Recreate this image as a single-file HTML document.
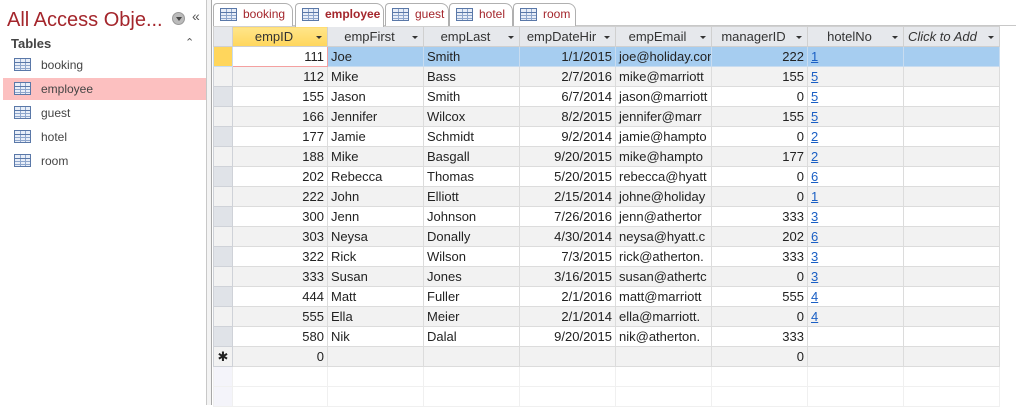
<!DOCTYPE html>
<html><head><meta charset="utf-8"><style>
*{margin:0;padding:0;box-sizing:border-box}
body{width:1016px;height:405px;background:#fff;font-family:"Liberation Sans",sans-serif;position:relative;overflow:hidden;color:#222}
.nav{position:absolute;left:0;top:0;width:207px;height:405px;background:#fff;border-right:1px solid #c8c8c8}
.sep{position:absolute;left:207px;top:0;width:5px;height:405px;background:#f3f3f3;border-right:1px solid #a8a8a8}
.title{position:absolute;left:7px;top:9px;font-size:20px;color:#a4262c;white-space:nowrap}
.circ{position:absolute;left:172px;top:12px;width:13px;height:13px;border-radius:50%;background:#bbb;border:1px solid #999}
.circ:after{content:"";position:absolute;left:3px;top:4px;border:3px solid transparent;border-top:4px solid #444}
.ch{position:absolute;left:192px;top:8px;font-size:14px;color:#555}
.tables{position:absolute;left:11px;top:36px;font-size:13px;font-weight:bold;color:#444}
.up{position:absolute;left:185px;top:36px;font-size:11px;color:#555}
.item{position:absolute;left:3px;width:203px;height:22px;font-size:12px;color:#444;line-height:22px;padding-left:38px}
.item.sel{background:#fcc0c0}
.ic{position:absolute;width:17px;height:13px;border:1px solid #5a78a8;background:
linear-gradient(#5a78a8,#5a78a8) 0 3px/100% 1px no-repeat,
linear-gradient(#8ea6cc,#8ea6cc) 0 6px/100% 1px no-repeat,
linear-gradient(#8ea6cc,#8ea6cc) 0 9px/100% 1px no-repeat,
linear-gradient(90deg,#8ea6cc,#8ea6cc) 5px 0/1px 100% no-repeat,
linear-gradient(90deg,#8ea6cc,#8ea6cc) 10px 0/1px 100% no-repeat,#e8eef8}
.item .ic{left:11px;top:4px}
.tabbar{position:absolute;left:213px;top:0;width:803px;height:26px;background:#fff;border-bottom:1px solid #c8c8c8}
.tab{position:absolute;top:3px;height:23px;border:1px solid #b0b0b0;border-bottom:none;border-radius:4px 8px 0 0;background:#fff;font-size:12px;color:#a4262c;line-height:21px;padding-left:29px;white-space:nowrap}
.tab .ic{left:6px;top:4px}
.tab.act{font-weight:bold;height:24px;z-index:2}
table{position:absolute;left:213px;top:26px;width:786px;border-collapse:collapse;table-layout:fixed;font-size:13px}
td{height:20px;border:1px solid #dcdcdc;padding:0 3px;white-space:nowrap;overflow:hidden}
th{height:20px;background:#e6e8ec;border:1px solid #d0d0d0;font-weight:normal;font-size:13px;color:#333;position:relative;text-align:center;padding-right:12px;white-space:nowrap;overflow:hidden}
th:after{content:"";position:absolute;right:5px;top:9px;border:3px solid transparent;border-top:3px solid #333}
th.s{background:#e6e8ec;padding:0}th.s:after{display:none}
th.y{background:linear-gradient(#ffe58a,#ffd65c)}
td.sel{background:#e0e3e8;border-color:#cfd2d8;padding:0;text-align:center}
tr.g td{background:#f2f2f2}
tr.b td{background:#a6cdf0;border-color:#c8dcf0}
tr.b td.sel{background:#ffd65c}
tr.b td.cur{background:#fff;border:1px solid #f4a0a0}
tr.e td{background:#fff;border-color:#f0f0f0}
tr.e td.sel{background:#f4f4fa}
.r{text-align:right}
a{color:#1a5fc4;text-decoration:underline}
</style></head><body>
<div class="nav">
<div class="title">All Access Obje...</div><div class="circ"></div><div class="ch">«</div>
<div class="tables">Tables</div><div class="up">⌃</div>
<div class="item" style="top:54px"><span class="ic"></span>booking</div>
<div class="item sel" style="top:78px"><span class="ic"></span>employee</div>
<div class="item" style="top:102px"><span class="ic"></span>guest</div>
<div class="item" style="top:126px"><span class="ic"></span>hotel</div>
<div class="item" style="top:150px"><span class="ic"></span>room</div>
</div>
<div class="sep"></div>
<div class="tabbar">
<div class="tab" style="left:0px;width:80px"><span class="ic"></span>booking</div>
<div class="tab act" style="left:82px;width:89px"><span class="ic"></span>employee</div>
<div class="tab" style="left:172px;width:64px"><span class="ic"></span>guest</div>
<div class="tab" style="left:236px;width:64px"><span class="ic"></span>hotel</div>
<div class="tab" style="left:300px;width:63px"><span class="ic"></span>room</div>
</div>
<table>
<colgroup><col style="width:19px"><col style="width:95px"><col style="width:96px"><col style="width:96px"><col style="width:96px"><col style="width:96px"><col style="width:96px"><col style="width:96px"><col style="width:96px"></colgroup>
<tr><th class="s"></th><th class="y">empID</th><th>empFirst</th><th>empLast</th><th>empDateHir</th><th>empEmail</th><th>managerID</th><th>hotelNo</th><th style="font-style:italic;text-align:left;padding-left:4px">Click to Add</th></tr>
<tr class="b"><td class="sel"></td><td class="r cur">111</td><td>Joe</td><td>Smith</td><td class="r">1/1/2015</td><td>joe@holiday.com</td><td class="r">222</td><td><a>1</a></td><td></td></tr>
<tr class="g"><td class="sel"></td><td class="r">112</td><td>Mike</td><td>Bass</td><td class="r">2/7/2016</td><td>mike@marriott</td><td class="r">155</td><td><a>5</a></td><td></td></tr>
<tr><td class="sel"></td><td class="r">155</td><td>Jason</td><td>Smith</td><td class="r">6/7/2014</td><td>jason@marriott</td><td class="r">0</td><td><a>5</a></td><td></td></tr>
<tr class="g"><td class="sel"></td><td class="r">166</td><td>Jennifer</td><td>Wilcox</td><td class="r">8/2/2015</td><td>jennifer@marr</td><td class="r">155</td><td><a>5</a></td><td></td></tr>
<tr><td class="sel"></td><td class="r">177</td><td>Jamie</td><td>Schmidt</td><td class="r">9/2/2014</td><td>jamie@hampto</td><td class="r">0</td><td><a>2</a></td><td></td></tr>
<tr class="g"><td class="sel"></td><td class="r">188</td><td>Mike</td><td>Basgall</td><td class="r">9/20/2015</td><td>mike@hampto</td><td class="r">177</td><td><a>2</a></td><td></td></tr>
<tr><td class="sel"></td><td class="r">202</td><td>Rebecca</td><td>Thomas</td><td class="r">5/20/2015</td><td>rebecca@hyatt</td><td class="r">0</td><td><a>6</a></td><td></td></tr>
<tr class="g"><td class="sel"></td><td class="r">222</td><td>John</td><td>Elliott</td><td class="r">2/15/2014</td><td>johne@holiday</td><td class="r">0</td><td><a>1</a></td><td></td></tr>
<tr><td class="sel"></td><td class="r">300</td><td>Jenn</td><td>Johnson</td><td class="r">7/26/2016</td><td>jenn@athertor</td><td class="r">333</td><td><a>3</a></td><td></td></tr>
<tr class="g"><td class="sel"></td><td class="r">303</td><td>Neysa</td><td>Donally</td><td class="r">4/30/2014</td><td>neysa@hyatt.c</td><td class="r">202</td><td><a>6</a></td><td></td></tr>
<tr><td class="sel"></td><td class="r">322</td><td>Rick</td><td>Wilson</td><td class="r">7/3/2015</td><td>rick@atherton.</td><td class="r">333</td><td><a>3</a></td><td></td></tr>
<tr class="g"><td class="sel"></td><td class="r">333</td><td>Susan</td><td>Jones</td><td class="r">3/16/2015</td><td>susan@athertc</td><td class="r">0</td><td><a>3</a></td><td></td></tr>
<tr><td class="sel"></td><td class="r">444</td><td>Matt</td><td>Fuller</td><td class="r">2/1/2016</td><td>matt@marriott</td><td class="r">555</td><td><a>4</a></td><td></td></tr>
<tr class="g"><td class="sel"></td><td class="r">555</td><td>Ella</td><td>Meier</td><td class="r">2/1/2014</td><td>ella@marriott.</td><td class="r">0</td><td><a>4</a></td><td></td></tr>
<tr><td class="sel"></td><td class="r">580</td><td>Nik</td><td>Dalal</td><td class="r">9/20/2015</td><td>nik@atherton.</td><td class="r">333</td><td></td><td></td></tr>
<tr class="g"><td class="sel">✱</td><td class="r">0</td><td></td><td></td><td></td><td></td><td class="r">0</td><td></td><td></td></tr>
<tr class="e"><td class="sel"></td><td></td><td></td><td></td><td></td><td></td><td></td><td></td><td></td></tr>
<tr class="e"><td class="sel"></td><td></td><td></td><td></td><td></td><td></td><td></td><td></td><td></td></tr>
</table>
</body></html>
